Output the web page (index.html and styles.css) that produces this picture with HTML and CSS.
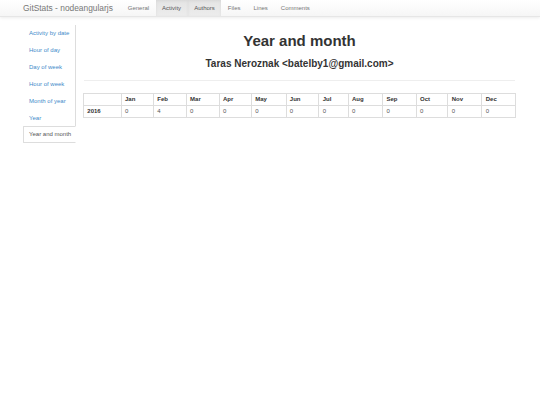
FILE: index.html
```html
<!DOCTYPE html>
<html>
<head>
<meta charset="utf-8">
<title>GitStats - nodeangularjs</title>
<link rel="stylesheet" href="styles.css">
</head>
<body>
<nav class="navbar">
  <span class="brand">GitStats - nodeangularjs</span>
  <ul class="nav">
    <li><a href="#">General</a></li>
    <li class="active"><a href="#">Activity</a></li>
    <li class="active"><a href="#">Authors</a></li>
    <li><a href="#">Files</a></li>
    <li><a href="#">Lines</a></li>
    <li><a href="#">Comments</a></li>
  </ul>
</nav>
<div class="page">
  <ul class="side">
    <li><a href="#">Activity by date</a></li>
    <li><a href="#">Hour of day</a></li>
    <li><a href="#">Day of week</a></li>
    <li><a href="#">Hour of week</a></li>
    <li><a href="#">Month of year</a></li>
    <li><a href="#">Year</a></li>
    <li class="current"><a href="#">Year and month</a></li>
  </ul>
  <main class="main">
    <h1 class="title">Year and month</h1>
    <h2 class="subtitle">Taras Neroznak &lt;batelby1@gmail.com&gt;</h2>
    <hr class="rule">
    <table class="grid">
      <thead>
        <tr><th></th><th>Jan</th><th>Feb</th><th>Mar</th><th>Apr</th><th>May</th><th>Jun</th><th>Jul</th><th>Aug</th><th>Sep</th><th>Oct</th><th>Nov</th><th>Dec</th></tr>
      </thead>
      <tbody>
        <tr><th>2016</th><td>0</td><td>4</td><td>0</td><td>0</td><td>0</td><td>0</td><td>0</td><td>0</td><td>0</td><td>0</td><td>0</td><td>0</td></tr>
      </tbody>
    </table>
  </main>
</div>
</body>
</html>
```
FILE: styles.css
```css
html, body {
  margin: 0;
  padding: 0;
  background: #fff;
  font-family: "Liberation Sans", Arial, sans-serif;
  color: #333;
}
a { text-decoration: none; }

.navbar {
  display: flex;
  align-items: stretch;
  height: 16px;
  background: linear-gradient(#ffffff, #f6f6f6);
  border-bottom: 1px solid #e6e6e6;
  box-shadow: 0 1px 3px rgba(0,0,0,0.08);
}
.brand {
  padding-left: 23px;
  margin-right: 8.4px;
  font-size: 8.4px;
  line-height: 16px;
  color: #777;
}
.nav {
  display: flex;
  margin: 0;
  padding: 0;
  list-style: none;
}
.nav li a {
  display: block;
  padding: 0 6.5px;
  font-size: 6px;
  line-height: 16px;
  color: #777;
}
.nav li.active a {
  background: linear-gradient(#e4e4e4, #ececec);
  box-shadow: inset 0 1px 3px rgba(0,0,0,0.06);
  color: #555;
}

.page {
  display: flex;
  align-items: flex-start;
}
.side {
  list-style: none;
  margin: 8px 0 0 23px;
  padding: 0;
  width: 52px;
  border-right: 1px solid #ddd;
}
.side li a {
  display: block;
  padding-left: 6px;
  font-size: 6px;
  line-height: 17px;
  color: #428bca;
  white-space: nowrap;
}
.side li.current {
  margin-right: -1px;
  margin-top: -1px;
}
.side li.current a {
  border: 1px solid #ddd;
  border-right-color: #fff;
  border-radius: 1px 0 0 1px;
  background: #fff;
  line-height: 15px;
  color: #555;
  padding-left: 5px;
}

.main {
  width: 433px;
  margin-left: 7px;
}
.title {
  margin: 16px 0 0;
  font-size: 15px;
  line-height: 16.5px;
  font-weight: bold;
  text-align: center;
  color: #333;
}
.subtitle {
  margin: 8px 0 0;
  font-size: 10px;
  line-height: 11px;
  font-weight: bold;
  text-align: center;
  color: #333;
}
.rule {
  margin: 11.5px 1px 0 1px;
  border: 0;
  border-top: 1px solid #eee;
  height: 0;
}
.grid {
  width: 100%;
  margin-top: 12px;
  border-collapse: collapse;
  font-size: 6px;
}
.grid th, .grid td {
  border: 1px solid #ddd;
  padding: 0 3.3px;
  height: 11px;
  line-height: 11px;
  text-align: left;
}
.grid th { font-weight: bold; color: #333; }
.grid td { color: #555; }
```
